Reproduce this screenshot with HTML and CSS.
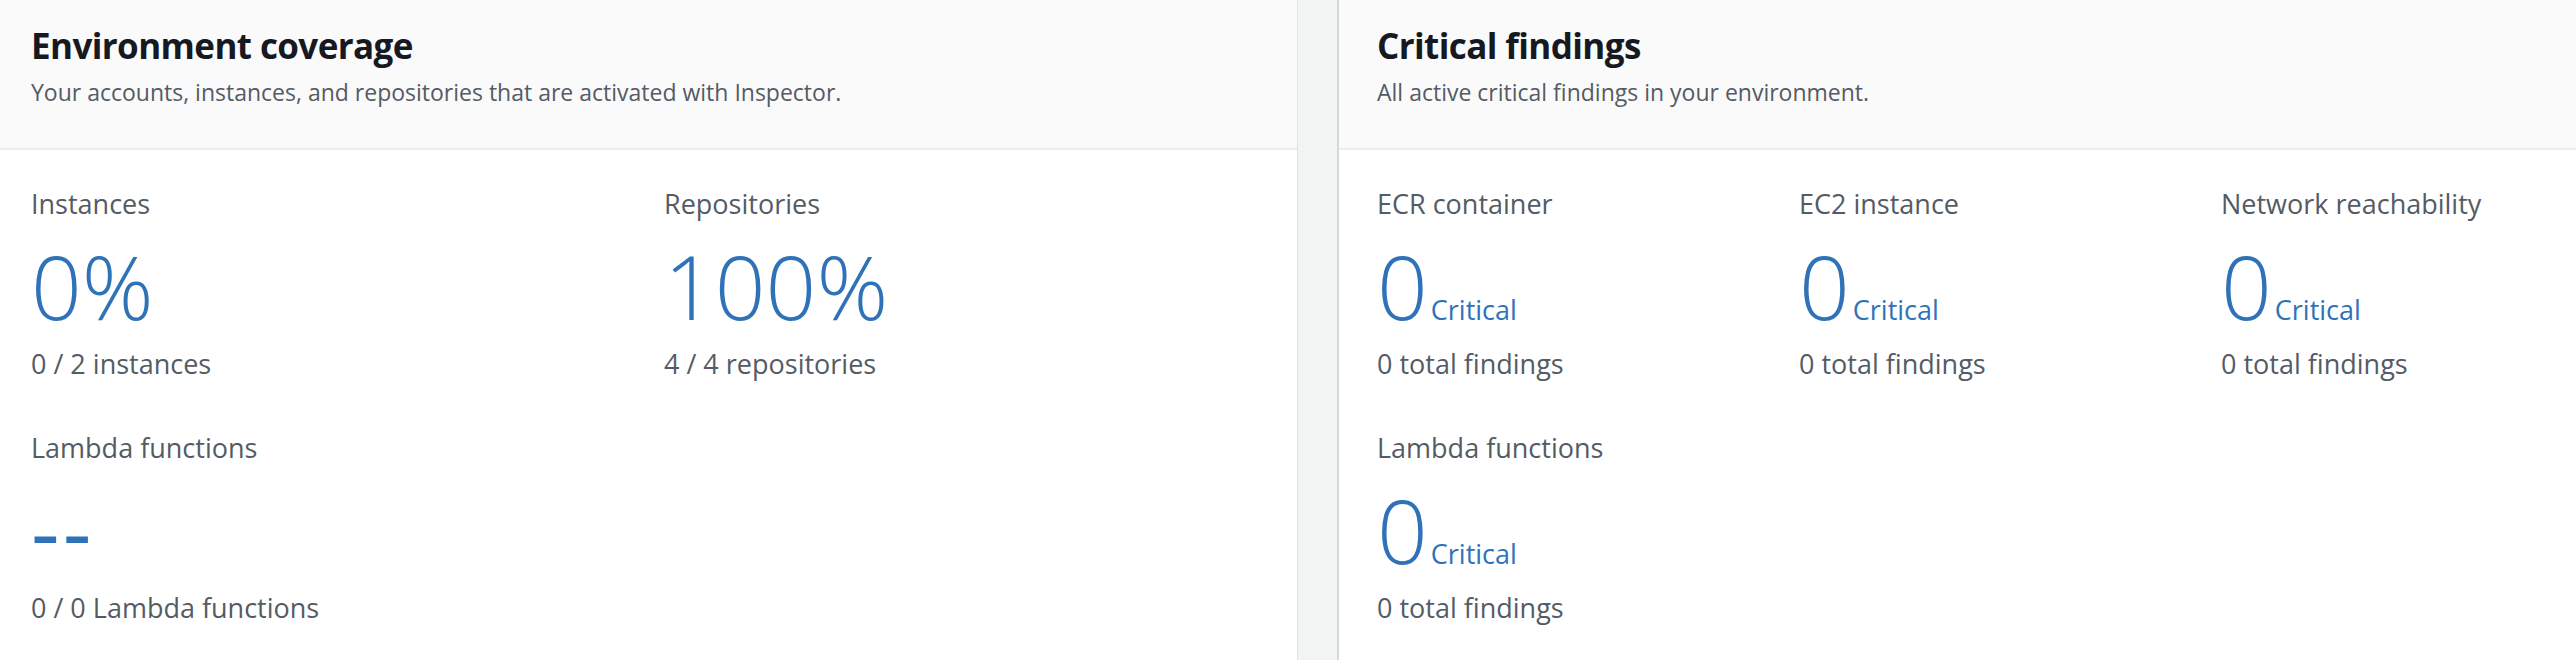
FILE: index.html
```html
<!DOCTYPE html>
<html lang="en">
<head>
<meta charset="utf-8">
<title>Inspector dashboard</title>
<link rel="stylesheet" href="styles.css">
</head>
<body>
<div class="dashboard">
  <section class="panel panel-left">
    <header class="panel-header">
      <h2 class="panel-title">Environment coverage</h2>
      <p class="panel-desc">Your accounts, instances, and repositories that are activated with Inspector.</p>
    </header>
    <div class="panel-body grid-two">
      <div class="stat">
        <div class="stat-label">Instances</div>
        <div class="stat-value">0%</div>
        <div class="stat-sub">0 / 2 instances</div>
      </div>
      <div class="stat">
        <div class="stat-label">Repositories</div>
        <div class="stat-value">100%</div>
        <div class="stat-sub">4 / 4 repositories</div>
      </div>
      <div class="stat">
        <div class="stat-label">Lambda functions</div>
        <div class="stat-value stat-empty">--</div>
        <div class="stat-sub">0 / 0 Lambda functions</div>
      </div>
    </div>
  </section>
  <div class="gutter"></div>
  <section class="panel panel-right">
    <header class="panel-header">
      <h2 class="panel-title">Critical findings</h2>
      <p class="panel-desc">All active critical findings in your environment.</p>
    </header>
    <div class="panel-body grid-three">
      <div class="stat">
        <div class="stat-label">ECR container</div>
        <div class="stat-value">0<span class="stat-unit">Critical</span></div>
        <div class="stat-sub">0 total findings</div>
      </div>
      <div class="stat">
        <div class="stat-label">EC2 instance</div>
        <div class="stat-value">0<span class="stat-unit">Critical</span></div>
        <div class="stat-sub">0 total findings</div>
      </div>
      <div class="stat">
        <div class="stat-label">Network reachability</div>
        <div class="stat-value">0<span class="stat-unit">Critical</span></div>
        <div class="stat-sub">0 total findings</div>
      </div>
      <div class="stat">
        <div class="stat-label">Lambda functions</div>
        <div class="stat-value">0<span class="stat-unit">Critical</span></div>
        <div class="stat-sub">0 total findings</div>
      </div>
    </div>
  </section>
</div>
</body>
</html>
```

FILE: styles.css
```css
html, body {
  margin: 0;
  padding: 0;
  background: #ffffff;
}

body {
  font-family: "Open Sans", "Noto Sans", "Liberation Sans", sans-serif;
  color: #545b64;
  width: 2576px;
  height: 660px;
  overflow: hidden;
}

.dashboard {
  display: flex;
  height: 660px;
}

.panel {
  background: #ffffff;
  display: flex;
  flex-direction: column;
  overflow: hidden;
}

.panel-left {
  width: 1297px;
  border-right: 1px solid #dfe2e2;
  flex: none;
}

.panel-right {
  flex: 1;
  border-left: 2px solid #d3d8d8;
}

.gutter {
  width: 39px;
  flex: none;
  background: #f2f3f3;
}

.panel-header {
  flex: none;
  background: #fafafa;
  border-bottom: 2px solid #eaeded;
  height: 150px;
  box-sizing: border-box;
  padding: 24px 0 0 31px;
}

.panel-right .panel-header {
  padding-left: 38px;
}

.panel-title {
  margin: 0;
  font-size: 35px;
  line-height: 44px;
  font-weight: 700;
  color: #16191f;
  letter-spacing: -0.6px;
}

.panel-desc {
  margin: 8px 0 0;
  font-size: 23px;
  line-height: 32px;
  color: #545b64;
}

.panel-body {
  flex: none;
  display: grid;
  row-gap: 44px;
  padding: 34px 0 0 31px;
}

.panel-right .panel-body {
  padding-left: 38px;
}

.grid-two {
  grid-template-columns: repeat(2, 633px);
}

.grid-three {
  grid-template-columns: repeat(3, 422px);
}

.stat {
  display: flex;
  flex-direction: column;
}

.stat-label {
  font-size: 27px;
  line-height: 40px;
  color: #545b64;
}

.stat-value {
  margin-top: 12px;
  height: 100px;
  font-size: 89px;
  line-height: 100px;
  font-weight: 300;
  color: #2f72b8;
  white-space: nowrap;
}

.stat-empty {
  font-weight: 400;
  letter-spacing: 3px;
}

.stat-unit {
  font-size: 27px;
  line-height: 27px;
  font-weight: 400;
  margin-left: 3px;
}

.stat-sub {
  margin-top: 8px;
  font-size: 27px;
  line-height: 40px;
  color: #545b64;
}
```
